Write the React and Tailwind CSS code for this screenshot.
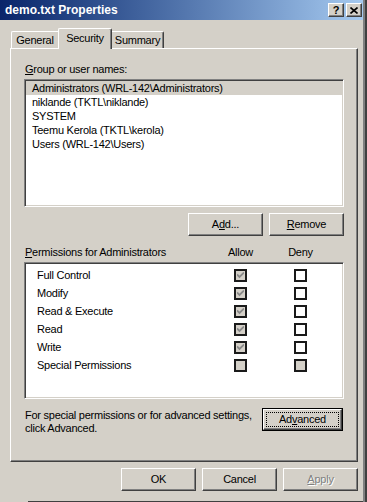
import React from 'react';

const raised =
  'border border-t-white border-l-white border-r-[#404040] border-b-[#404040] shadow-[inset_-1px_-1px_0_#808080]';
const sunken =
  'border border-t-[#808080] border-l-[#808080] border-r-white border-b-white shadow-[inset_1px_1px_0_#404040,inset_-1px_-1px_0_#d4d0c8]';

function Button({ children, className = '', disabled, isDefault }) {
  if (isDefault) {
    return (
      <div className={`h-[23px] border border-black ${className}`}>
        <div className={`h-full w-full bg-[#d4d0c8] ${raised} p-[2px]`}>
          <div className="h-full w-full border border-dotted border-black flex items-center justify-center">
            {children}
          </div>
        </div>
      </div>
    );
  }
  return (
    <div
      className={`w-[75px] h-[23px] bg-[#d4d0c8] flex items-center justify-center ${raised} ${
        disabled ? 'text-[#808080] [text-shadow:1px_1px_0_#fff]' : ''
      } ${className}`}
    >
      {children}
    </div>
  );
}

function Check({ checked, grey }) {
  return (
    <span
      className={`w-[13px] h-[13px] shrink-0 border-2 border-[#1a1a1a] flex items-center justify-center ${
        grey ? 'bg-[#d4d0c8]' : 'bg-white'
      }`}
    >
      {checked && (
        <svg width="7" height="7" viewBox="0 0 7 7">
          <path d="M0 2.5 L2.5 5 L7 0.5" fill="none" stroke="#8a8a8a" strokeWidth="1.8" />
        </svg>
      )}
    </span>
  );
}

const users = [
  'Administrators (WRL-142\\Administrators)',
  'niklande (TKTL\\niklande)',
  'SYSTEM',
  'Teemu Kerola (TKTL\\kerola)',
  'Users (WRL-142\\Users)',
];

const perms = [
  { name: 'Full Control', allow: true },
  { name: 'Modify', allow: true },
  { name: 'Read & Execute', allow: true },
  { name: 'Read', allow: true },
  { name: 'Write', allow: true },
  { name: 'Special Permissions', allow: false, special: true },
];

export default function App() {
  return (
    <div className="w-[367px] h-[502px] bg-[#d4d0c8] overflow-hidden flex font-['Liberation_Sans',Arial,sans-serif] text-[11px] leading-[13px] tracking-[-0.25px] text-black">
      <div className="w-[363px] h-full flex flex-col">
        {/* title bar */}
        <div className="h-[20px] flex items-center pl-[5px] pr-px bg-gradient-to-r from-[#0a246a] to-[#a6caf0]">
          <span className="flex-1 text-white font-bold text-[12px] tracking-normal">demo.txt Properties</span>
          <div className={`w-[16px] h-[14px] bg-[#d4d0c8] ${raised} flex items-center justify-center font-bold text-[11px] tracking-normal`}>
            ?
          </div>
          <div className={`ml-[2px] w-[16px] h-[14px] bg-[#d4d0c8] ${raised} flex items-center justify-center`}>
            <svg width="8" height="7" viewBox="0 0 8 7">
              <path d="M0.5 0.5 L7.5 6.5 M7.5 0.5 L0.5 6.5" stroke="#000" strokeWidth="1.6" />
            </svg>
          </div>
        </div>

        {/* tabs */}
        <div className="mt-[8px] h-[20px] flex items-end pl-[11px]">
          <div className="w-[47px] h-[17px] border-t border-l border-t-white border-l-white rounded-tl-[2px] flex justify-center pt-[2px]">
            General
          </div>
          <div className="relative z-10 -mb-px w-[54px] h-[21px] bg-[#d4d0c8] border-t border-l border-r border-t-white border-l-white border-r-[#404040] shadow-[inset_-1px_0_0_#808080] rounded-t-[2px] flex justify-center pt-[3px]">
            Security
          </div>
          <div className="w-[52px] h-[17px] border-t border-r border-t-white border-r-[#404040] shadow-[inset_-1px_0_0_#808080] rounded-tr-[2px] flex justify-center pt-[2px]">
            Summary
          </div>
        </div>

        {/* panel */}
        <div className={`ml-[10px] w-[348px] h-[414px] ${raised} pl-[13px] pt-[14px]`}>
          <div className="pl-px">
            <u>G</u>roup or user names:
          </div>
          <div className={`mt-[3px] w-[320px] h-[128px] bg-white ${sunken} px-px pt-px`}>
            {users.map((u, i) => (
              <div key={u} className={`h-[14px] flex items-center pl-[6px] ${i === 0 ? 'bg-[#d4d0c8]' : ''}`}>
                {u}
              </div>
            ))}
          </div>

          <div className="mt-[6px] w-[320px] flex justify-end gap-[6px]">
            <Button>
              A<u>d</u>d...
            </Button>
            <Button>
              <u>R</u>emove
            </Button>
          </div>

          <div className="mt-[10px] w-[320px] flex">
            <span className="w-[196px] pl-px">
              <u>P</u>ermissions for Administrators
            </span>
            <span className="w-[41px] text-center">Allow</span>
            <span className="ml-[19px] w-[41px] text-center">Deny</span>
          </div>

          <div className={`mt-[3px] w-[320px] h-[137px] bg-white ${sunken} pt-[3px]`}>
            {perms.map((p) => (
              <div key={p.name} className="h-[18px] flex items-center pl-[12px]">
                <span className="w-[197px]">{p.name}</span>
                <Check checked={p.allow} grey />
                <span className="ml-[47px]">
                  <Check grey={p.special} />
                </span>
              </div>
            ))}
          </div>

          <div className="mt-[9px] w-[319px] flex justify-between items-start">
            <div className="pt-px pl-px">
              For special permissions or for advanced settings,
              <br />
              click Advanced.
            </div>
            <Button isDefault className="w-[81px]">
              Ad<u>v</u>anced
            </Button>
          </div>
        </div>

        {/* dialog buttons */}
        <div className="mt-[6px] flex justify-end gap-[6px] pr-[5px]">
          <Button>OK</Button>
          <Button>Cancel</Button>
          <Button disabled>
            <u>A</u>pply
          </Button>
        </div>

        <div className="mt-auto ml-[28px] h-px bg-[#404040]" />
      </div>
      <div className="w-[2px] h-full bg-[#808080]" />
      <div className="w-[2px] h-full bg-[#404040]" />
    </div>
  );
}
